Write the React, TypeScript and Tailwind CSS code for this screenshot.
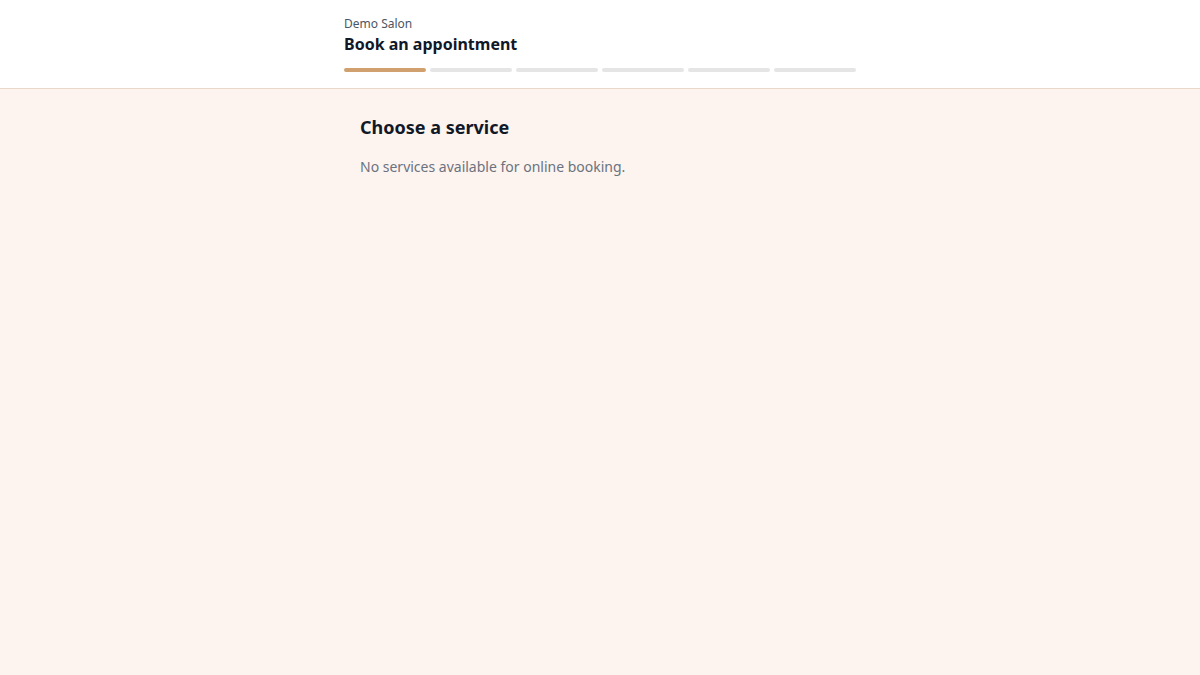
export default function App() {
  const steps = 6
  const current = 0

  return (
    <div className="min-h-screen flex flex-col bg-[#fdf4ef] font-['Noto_Sans',sans-serif]">
      <header className="bg-white border-b border-[#e8d6c8]">
        <div className="max-w-lg mx-auto pt-4 pb-4">
          <p className="text-xs text-[#4b5563]">Demo Salon</p>
          <h1 className="text-base font-bold text-[#111827]">Book an appointment</h1>
          <div className="mt-3 flex gap-1">
            {Array.from({ length: steps }).map((_, i) => (
              <div
                key={i}
                className={i <= current ? 'h-1 flex-1 rounded-full bg-[#d1a06f]' : 'h-1 flex-1 rounded-full bg-[#e5e5e5]'}
              />
            ))}
          </div>
        </div>
      </header>

      <main className="flex-1">
        <div className="max-w-lg mx-auto px-4 pt-6">
          <h2 className="text-lg font-bold text-[#111827]">Choose a service</h2>
          <p className="mt-4 text-sm text-[#6b7280]">No services available for online booking.</p>
        </div>
      </main>
    </div>
  )
}
